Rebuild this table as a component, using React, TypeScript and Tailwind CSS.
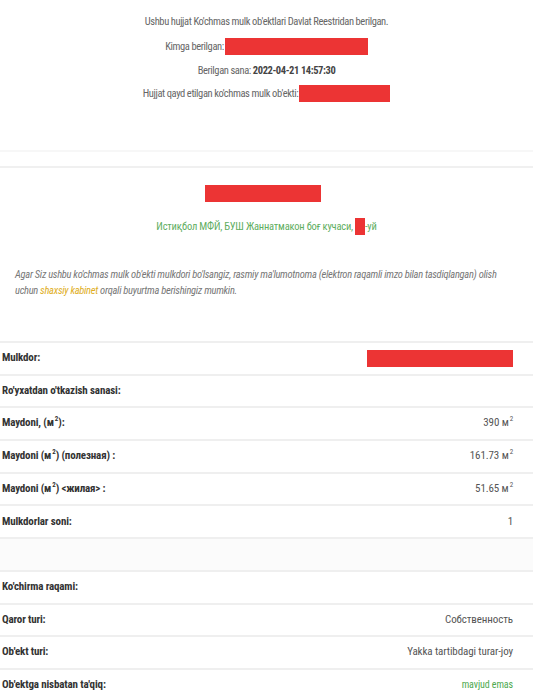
import React from "react";

function Sup2() {
  return <sup className="text-[7px] -top-[5px] ml-[1px]">2</sup>;
}

type Row = { label: React.ReactNode; value?: React.ReactNode; empty?: boolean };

const rows: Row[] = [
  { label: "Mulkdor:", value: <span className="block w-[146px] h-[17px] bg-[#ec3434]" /> },
  { label: "Ro'yxatdan o'tkazish sanasi:" },
  { label: <>Maydoni, (м<Sup2 />):</>, value: <>390 м<Sup2 /></> },
  { label: <>Maydoni (м<Sup2 />) (полезная) :</>, value: <>161.73 м<Sup2 /></> },
  { label: <>Maydoni (м<Sup2 />) &lt;жилая&gt; :</>, value: <>51.65 м<Sup2 /></> },
  { label: "Mulkdorlar soni:", value: "1" },
  { label: "", empty: true },
  { label: "Ko'chirma raqami:" },
  { label: "Qaror turi:", value: "Собственность" },
  { label: "Ob'ekt turi:", value: "Yakka tartibdagi turar-joy" },
  { label: "Ob'ektga nisbatan ta'qiq:", value: <span className="text-[#4ea84e] text-[10px]">mavjud emas</span> },
];

export default function App() {
  return (
    <div className="w-[533px] h-[699px] bg-white overflow-hidden [font-family:'Roboto_Condensed',Roboto,sans-serif] [font-stretch:75%]">
      <div className="pt-[14px] flex flex-col items-center text-[10.5px] tracking-[-0.4px] text-[#666] leading-[16px]">
        <div>Ushbu hujjat Ko'chmas mulk ob'ektlari Davlat Reestridan berilgan.</div>
        <div className="mt-[8px] flex items-center">
          <span>Kimga berilgan:</span>
          <span className="block w-[143px] h-[17px] bg-[#ec3434] ml-[1px]" />
        </div>
        <div className="mt-[8px]">
          Berilgan sana: <span className="font-bold text-[#444]">2022-04-21 14:57:30</span>
        </div>
        <div className="mt-[6px] flex items-center">
          <span>Hujjat qayd etilgan ko'chmas mulk ob'ekti:</span>
          <span className="block w-[91px] h-[17px] bg-[#ec3434] ml-[1px]" />
        </div>
      </div>
      <div className="mt-[48px] border-t-2 border-[#f7f7f7]" />
      <div className="mt-[14px] border-t-2 border-[#f0f0f0]" />
      <div className="mt-[17px] flex flex-col items-center">
        <span className="block w-[116px] h-[17px] bg-[#ec3434] ml-[-7px]" />
        <div className="mt-[16px] flex items-center text-[10.5px] tracking-[-0.2px] text-[#5fae5f]">
          <span>Истиқбол МФЙ, БУШ Жаннатмакон боғ кучаси,</span>
          <span className="block w-[10px] h-[17px] bg-[#ec3434] ml-[2px]" />
          <span>-уй</span>
        </div>
      </div>
      <p className="mt-[32px] pl-[15px] pr-[30px] text-[10.5px] tracking-[-0.28px] italic text-[#777] leading-[16px]">
        Agar Siz ushbu ko'chmas mulk ob'ekti mulkdori bo'lsangiz, rasmiy ma'lumotnoma (elektron raqamli imzo bilan tasdiqlangan) olish uchun{" "}
        <span className="text-[#e0ae1e]">shaxsiy kabinet</span> orqali buyurtma berishingiz mumkin.
      </p>
      <div className="mt-[42px] border-t-2 border-[#efefef]">
        {rows.map((r, i) => (
          <div
            key={i}
            className={
              "h-[32.7px] border-b-2 border-[#efefef] flex items-center justify-between pl-[2px] pr-[20px] " +
              (r.empty ? "bg-[#fbfbfb]" : "bg-white")
            }
          >
            <span className="font-bold text-[#333] text-[11px] tracking-[-0.15px]">{r.label}</span>
            <span className="text-[#555] text-[11px] tracking-[-0.1px]">{r.value}</span>
          </div>
        ))}
      </div>
    </div>
  );
}
